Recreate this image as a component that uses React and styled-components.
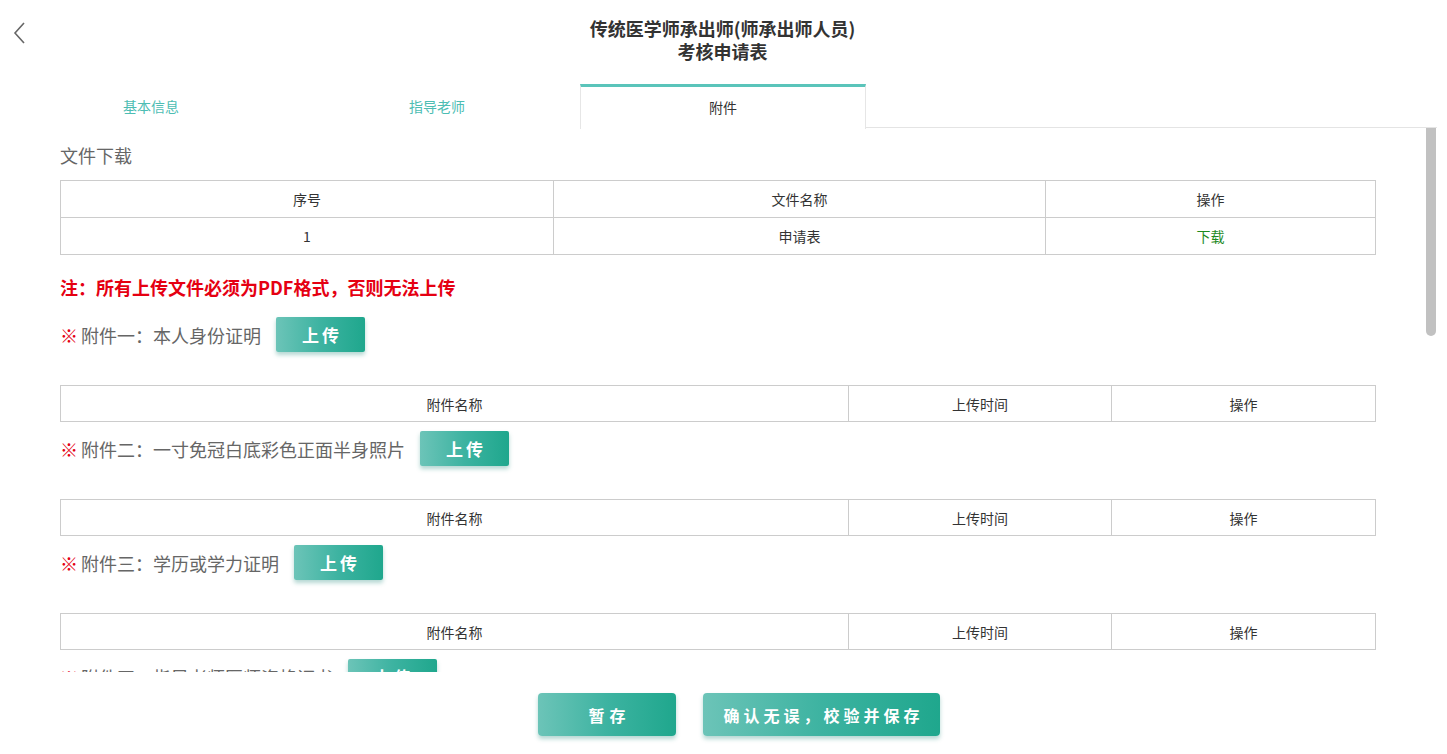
import React, { useEffect, useRef, useState } from 'react';
import styled, { createGlobalStyle } from 'styled-components';

const GlobalStyle = createGlobalStyle`
  html, body {
    margin: 0;
    padding: 0;
    background: #fff;
    font-family: "Noto Sans CJK SC", "Noto Sans", sans-serif;
    overflow: hidden;
  }
  * { box-sizing: border-box; }
`;

const Page = styled.div`
  margin: 0 10px 0 8px;
  height: 754px;
  display: flex;
  flex-direction: column;
`;

const Header = styled.header`
  position: relative;
  height: 84px;
  padding-top: 17px;
  text-align: center;
`;

const BackButton = styled.button`
  position: absolute;
  left: 2px;
  top: 20px;
  width: 20px;
  height: 26px;
  border: none;
  background: none;
  padding: 0;
  cursor: pointer;
`;

const Title = styled.h1`
  margin: 0;
  font-size: 18px;
  line-height: 23px;
  font-weight: 700;
  color: #333;
`;

const Tabs = styled.nav`
  display: flex;
  height: 44px;
  border-bottom: 1px solid #e4e4e4;
`;

const Tab = styled.div`
  width: 286px;
  height: ${(p) => (p.$active ? '45px' : '44px')};
  margin-bottom: ${(p) => (p.$active ? '-1px' : '0')};
  display: flex;
  align-items: center;
  justify-content: center;
  padding-bottom: 3px;
  font-size: 14px;
  color: ${(p) => (p.$active ? '#333' : '#4dbdb3')};
  background: #fff;
  border-top: 3px solid ${(p) => (p.$active ? '#5ac4ba' : 'transparent')};
  border-left: 1px solid ${(p) => (p.$active ? '#e6e6e6' : 'transparent')};
  border-right: 1px solid ${(p) => (p.$active ? '#e6e6e6' : 'transparent')};
  cursor: pointer;
`;

const ScrollWrap = styled.div`
  position: relative;
  height: 544px;
`;

const Scroll = styled.div`
  height: 100%;
  overflow-y: scroll;
  padding: 15px 62px 96px 52px;
  scrollbar-width: none;

  &::-webkit-scrollbar {
    display: none;
  }
`;

const Thumb = styled.div`
  position: absolute;
  right: 1px;
  width: 10px;
  background: #c1c1c1;
  border-radius: 0 0 5px 5px;
`;

const SectionTitle = styled.div`
  font-size: 18px;
  line-height: 24px;
  color: #666;
  margin-bottom: 13px;
`;

const Table = styled.table`
  width: 100%;
  border-collapse: collapse;
  table-layout: fixed;
`;

const Cell = styled.td`
  height: ${(p) => p.$h || 36}px;
  border: 1px solid #ccc;
  text-align: center;
  vertical-align: middle;
  font-size: 14px;
  color: ${(p) => (p.$link ? '#1e8a1e' : '#333')};
  cursor: ${(p) => (p.$link ? 'pointer' : 'default')};
  padding: 0;
`;

const Note = styled.div`
  margin-top: 20px;
  margin-bottom: 18px;
  font-size: 18px;
  line-height: 24px;
  font-weight: 700;
  color: #e50012;
`;

const AttachRow = styled.div`
  display: flex;
  align-items: center;
  height: 35px;
  margin-bottom: 33px;
`;

const Label = styled.span`
  font-size: 18px;
  color: #666;
  margin-right: 15px;
`;

const Mark = styled.span`
  color: #e50012;
  margin-right: 3px;
`;

const TealButton = styled.button`
  width: ${(p) => p.$w}px;
  height: ${(p) => p.$h}px;
  border: none;
  border-radius: ${(p) => p.$r || 2}px;
  background: linear-gradient(90deg, #6cc4b8 0%, #3db3a1 50%, #1fa78d 100%);
  box-shadow: 0 3px 4px rgba(40, 140, 125, 0.35);
  color: #fff;
  font-family: "Noto Sans CJK SC", sans-serif;
  font-size: ${(p) => p.$fs || 16}px;
  font-weight: 700;
  letter-spacing: ${(p) => p.$ls}px;
  text-indent: ${(p) => p.$ls}px;
  cursor: pointer;
  padding: 0;
`;

const Section = styled.div`
  margin-bottom: 9px;
`;

const Footer = styled.footer`
  flex: 1;
  display: flex;
  justify-content: center;
  align-items: flex-start;
  gap: 27px;
  padding-top: 21px;
  padding-left: 33px;
`;

const attachments = [
  '本人身份证明',
  '一寸免冠白底彩色正面半身照片',
  '学历或学力证明',
  '指导老师医师资格证书',
  '指导老师医师执业证书',
  '指导老师从事中医临床工作年限证明',
  '跟师学习笔记',
  '出师结业论文',
  '跟师临床医案',
  '其他材料',
];

const nums = ['一', '二', '三', '四', '五', '六', '七', '八', '九', '十'];

const ChevronLeft = () => (
  <svg width="20" height="26" viewBox="0 0 20 26">
    <polyline points="14,3 5,13 14,23" fill="none" stroke="#666" strokeWidth="1.6" />
  </svg>
);

const App = () => {
  const scrollRef = useRef(null);
  const [thumb, setThumb] = useState({ top: 0, height: 210 });

  const update = () => {
    const el = scrollRef.current;
    if (!el) return;
    const h = el.clientHeight;
    const sh = el.scrollHeight;
    const height = Math.max(30, (h * h) / sh);
    const top = sh > h ? (el.scrollTop / (sh - h)) * (h - height) : 0;
    setThumb({ top, height });
  };

  useEffect(() => {
    update();
  }, []);

  return (
    <>
      <GlobalStyle />
      <Page>
        <Header>
          <BackButton aria-label="返回">
            <ChevronLeft />
          </BackButton>
          <Title>
            传统医学师承出师(师承出师人员)
            <br />
            考核申请表
          </Title>
        </Header>

        <Tabs>
          <Tab>基本信息</Tab>
          <Tab>指导老师</Tab>
          <Tab $active>附件</Tab>
        </Tabs>

        <ScrollWrap>
          <Scroll ref={scrollRef} onScroll={update}>
            <SectionTitle>文件下载</SectionTitle>
            <Table>
              <colgroup>
                <col style={{ width: '493px' }} />
                <col style={{ width: '492px' }} />
                <col style={{ width: '330px' }} />
              </colgroup>
              <tbody>
                <tr>
                  <Cell $h={37}>序号</Cell>
                  <Cell $h={37}>文件名称</Cell>
                  <Cell $h={37}>操作</Cell>
                </tr>
                <tr>
                  <Cell $h={37}>1</Cell>
                  <Cell $h={37}>申请表</Cell>
                  <Cell $h={37} $link>下载</Cell>
                </tr>
              </tbody>
            </Table>

            <Note>注：所有上传文件必须为PDF格式，否则无法上传</Note>

            {attachments.map((name, i) => (
              <Section key={name}>
                <AttachRow>
                  <Label>
                    <Mark>※</Mark>附件{nums[i]}：{name}
                  </Label>
                  <TealButton $w={89} $h={35} $ls={3} $fs={17}>
                    上传
                  </TealButton>
                </AttachRow>
                <Table>
                  <colgroup>
                    <col style={{ width: '788px' }} />
                    <col style={{ width: '263px' }} />
                    <col style={{ width: '264px' }} />
                  </colgroup>
                  <tbody>
                    <tr>
                      <Cell>附件名称</Cell>
                      <Cell>上传时间</Cell>
                      <Cell>操作</Cell>
                    </tr>
                  </tbody>
                </Table>
              </Section>
            ))}
          </Scroll>
          <Thumb style={{ top: thumb.top, height: thumb.height }} />
        </ScrollWrap>

        <Footer>
          <TealButton $w={138} $h={43} $ls={5} $r={4}>
            暂存
          </TealButton>
          <TealButton $w={237} $h={43} $ls={4} $r={4}>
            确认无误，校验并保存
          </TealButton>
        </Footer>
      </Page>
    </>
  );
};

export default App;
